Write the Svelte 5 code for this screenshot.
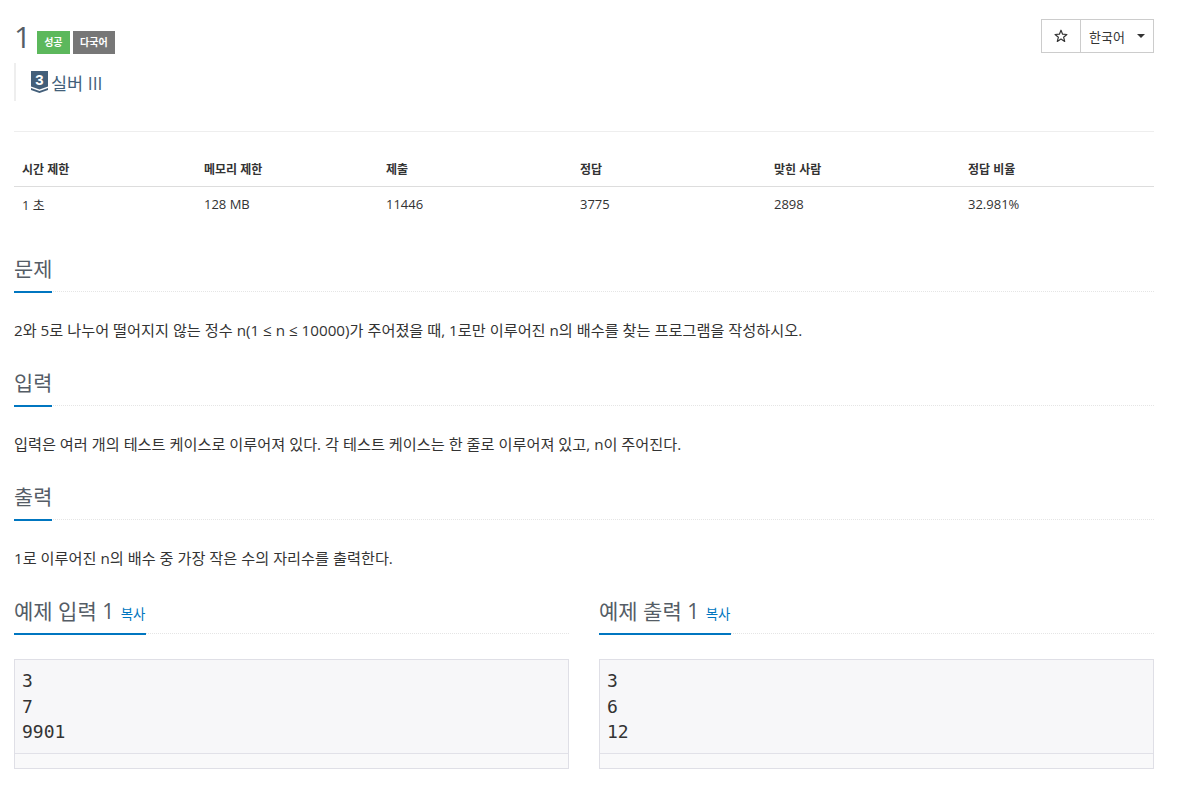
<script>
  const stats = [
    ['시간 제한', '1 초'],
    ['메모리 제한', '128 MB'],
    ['제출', '11446'],
    ['정답', '3775'],
    ['맞힌 사람', '2898'],
    ['정답 비율', '32.981%']
  ];

  const sections = [
    ['문제', '2와 5로 나누어 떨어지지 않는 정수 n(1 ≤ n ≤ 10000)가 주어졌을 때, 1로만 이루어진 n의 배수를 찾는 프로그램을 작성하시오.'],
    ['입력', '입력은 여러 개의 테스트 케이스로 이루어져 있다. 각 테스트 케이스는 한 줄로 이루어져 있고, n이 주어진다.'],
    ['출력', '1로 이루어진 n의 배수 중 가장 작은 수의 자리수를 출력한다.']
  ];

  const samples = [
    ['예제 입력 1', '3\n7\n9901'],
    ['예제 출력 1', '3\n6\n12']
  ];
</script>

<div class="page">
  <header class="top">
    <div class="title-row">
      <div class="title">
        <span class="num">1</span>
        <span class="label green">성공</span>
        <span class="label gray">다국어</span>
      </div>
      <div class="btns">
        <button type="button" class="star" aria-label="즐겨찾기">
          <svg width="14" height="14" viewBox="0 0 14 14">
            <path d="M7 1.2L8.6 5.2L12.9 5.5L9.6 8.2L10.7 12.4L7 10.1L3.3 12.4L4.4 8.2L1.1 5.5L5.4 5.2Z" fill="none" stroke="#333" stroke-width="1.2" stroke-linejoin="round" />
          </svg>
        </button>
        <button type="button" class="lang">한국어<span class="caret"></span></button>
      </div>
    </div>
    <blockquote class="tier">
      <svg width="17" height="22" viewBox="0 0 17 22">
        <path d="M0 0H17V15.5L8.5 18.5L0 15.5Z" fill="#435f7a" />
        <path d="M0 17L8.5 20L17 17V19L8.5 22L0 19Z" fill="#435f7a" />
        <text x="8.5" y="14" text-anchor="middle" class="tier-num">3</text>
      </svg>
      <span>실버 III</span>
    </blockquote>
  </header>

  <table class="stats">
    <colgroup>
      <col class="narrow" />
      <col class="narrow" />
      <col />
      <col />
      <col />
      <col />
    </colgroup>
    <thead>
      <tr>
        {#each stats as s}
          <th>{s[0]}</th>
        {/each}
      </tr>
    </thead>
    <tbody>
      <tr>
        {#each stats as s}
          <td>{s[1]}</td>
        {/each}
      </tr>
    </tbody>
  </table>

  {#each sections as s}
    <section>
      <div class="headline"><h2>{s[0]}</h2></div>
      <p>{s[1]}</p>
    </section>
  {/each}

  <div class="samples">
    {#each samples as s}
      <div class="sample">
        <div class="headline"><h2>{s[0]} <span class="copy">복사</span></h2></div>
        <pre>{s[1]}</pre>
      </div>
    {/each}
  </div>
</div>

<style>
  :global(body) {
    background: #fff;
    color: #333;
    font-family: "Open Sans", "Noto Sans CJK KR", sans-serif;
  }
  .page {
    padding: 15px 35px 0 14px;
  }
  .top {
    height: 116px;
    border-bottom: 1px solid #eee;
  }
  .title-row {
    display: flex;
    justify-content: space-between;
    align-items: flex-start;
  }
  .title {
    display: flex;
    align-items: flex-start;
    height: 48px;
  }
  .num {
    font-size: 30px;
    line-height: 44px;
    color: #555d66;
    margin-right: 6px;
  }
  .label {
    margin: 16px 3px 0 0;
    height: 23px;
    line-height: 23px;
    padding: 0 7px;
    font-size: 10px;
    font-weight: 700;
    color: #fff;
  }
  .green { background: #5cb85c; }
  .gray { background: #777; padding: 0 7.5px; }
  .btns {
    display: flex;
    margin-top: 4px;
  }
  .btns button {
    height: 34px;
    background: #fff;
    border: 1px solid #ccc;
    color: #333;
    font-family: inherit;
    font-size: 13px;
    padding: 0;
  }
  .star {
    width: 40px;
    display: flex;
    align-items: center;
    justify-content: center;
  }
  .lang {
    width: 74px;
    margin-left: -1px;
    display: flex;
    align-items: center;
    padding-left: 8px !important;
  }
  .caret {
    width: 0;
    height: 0;
    margin-left: 12px;
    border-top: 4px solid #333;
    border-left: 4px solid transparent;
    border-right: 4px solid transparent;
  }
  .tier {
    margin: 0;
    height: 38px;
    border-left: 2px solid #eee;
    padding-left: 15px;
    display: flex;
    align-items: center;
    gap: 3px;
    font-size: 17.5px;
    color: #435f7a;
  }
  .tier-num {
    font: 700 15px "Liberation Sans", sans-serif;
    fill: #fff;
  }
  .stats {
    width: 100%;
    border-collapse: collapse;
    font-size: 12px;
    margin: 20px 0 34px;
    table-layout: fixed;
  }
  .narrow {
    width: 182px;
  }
  .stats th {
    text-align: left;
    font-weight: 700;
    height: 34px;
    padding: 0 8px;
    border-bottom: 1px solid #ddd;
    color: #333;
  }
  .stats td {
    height: 34px;
    padding: 0 8px;
    font-size: 13px;
    color: #333;
  }
  section {
    height: 114px;
  }
  .headline {
    border-bottom: 1px dotted #e5e5e5;
    height: 36px;
    position: relative;
  }
  h2 {
    display: inline-block;
    margin: 0;
    line-height: 28px;
    font-size: 20.8px;
    font-weight: 400;
    color: #555d66;
    border-bottom: 2px solid #0076c0;
    box-sizing: border-box;
    height: 38px;
  }
  p {
    margin: 26px 0 0;
    font-size: 15.2px;
    line-height: 24px;
    color: #333;
  }
  .samples {
    display: grid;
    grid-template-columns: 1fr 1fr;
    gap: 30px;
  }
  .copy {
    font-size: 13.4px;
    color: #0076c0;
    margin: 0 1px;
  }
  .sample h2 {
    font-size: 21px;
  }
  pre {
    margin: 25px 0 0;
    background: #f7f7f9;
    border: 1px solid #dfdfe6;
    height: 110px;
    box-sizing: border-box;
    padding: 8px 7px;
    font: 18px/25.6px "DejaVu Sans Mono", monospace;
    color: #333;
    box-shadow: inset 0 -14px 0 #f9f9fa, inset 0 -15px 0 #e1e1e8;
  }
</style>
